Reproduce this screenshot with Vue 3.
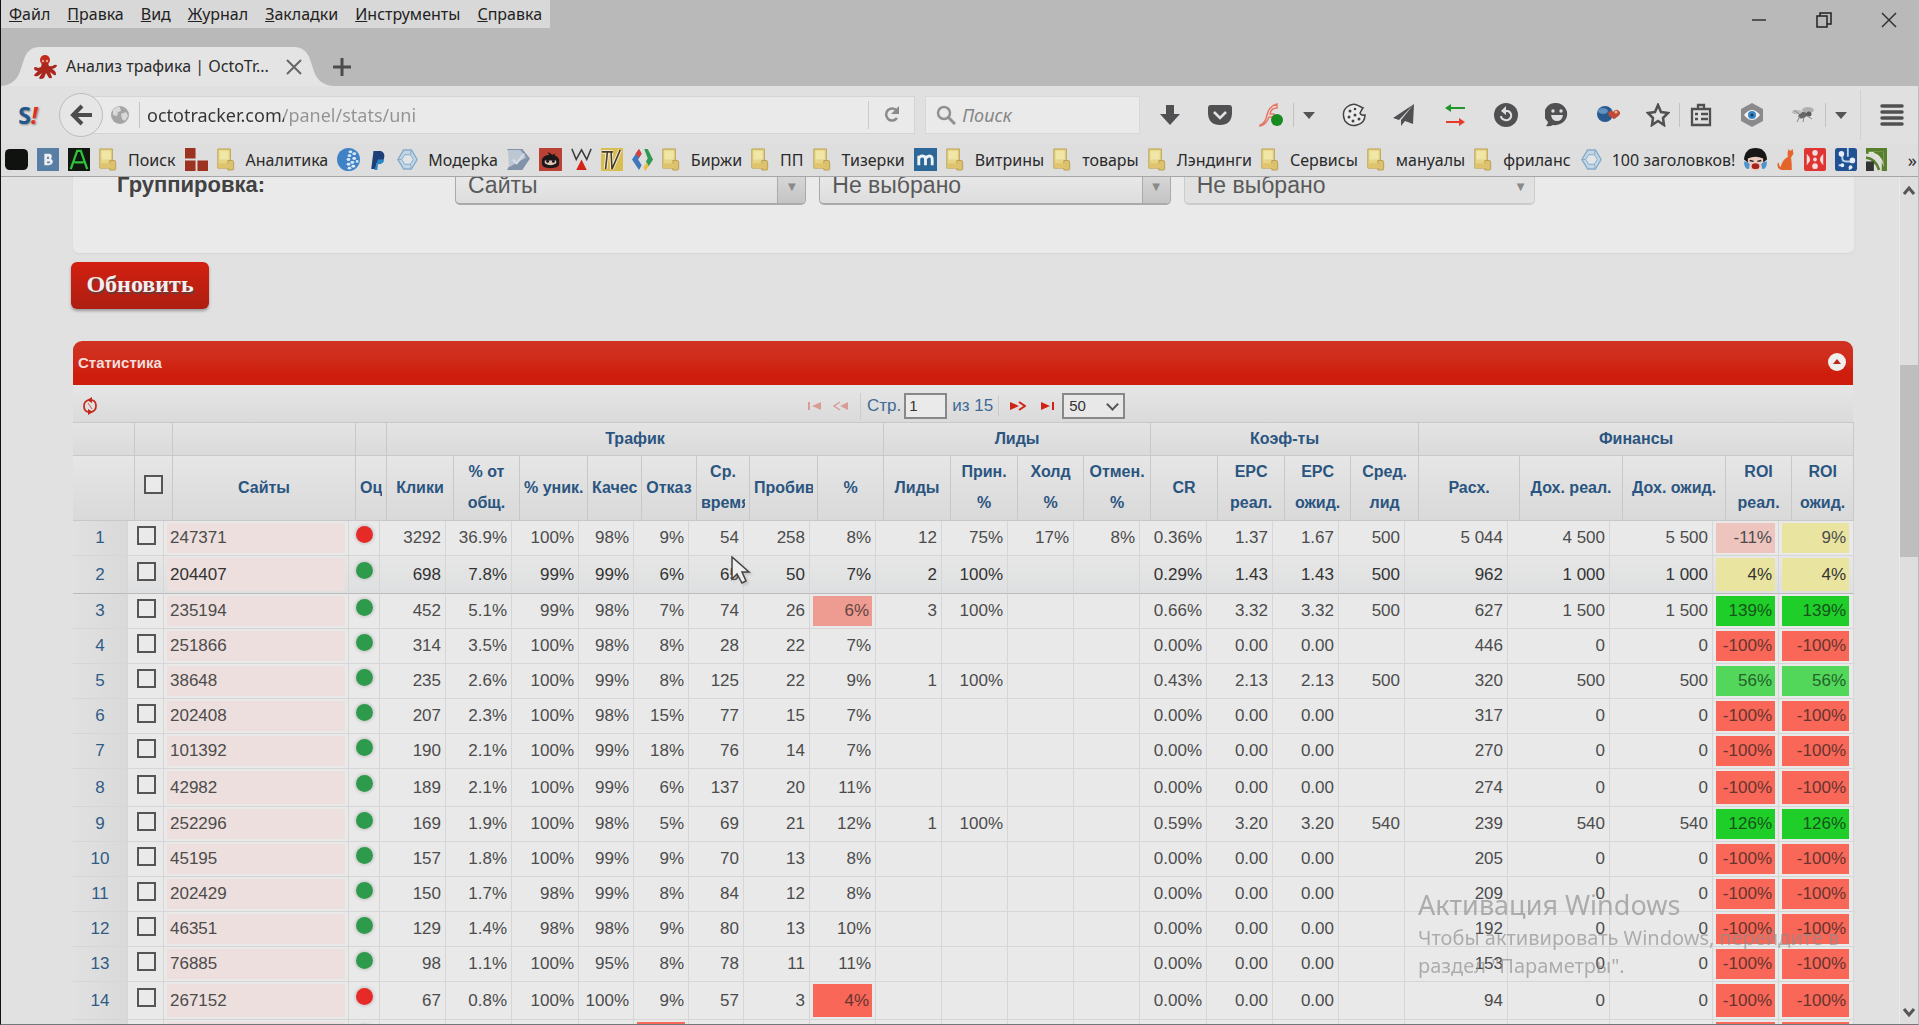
<script setup>
import { ref } from 'vue'

const menu = ['Файл', 'Правка', 'Вид', 'Журнал', 'Закладки', 'Инструменты', 'Справка']
const url = ref('octotracker.com/panel/stats/uni')
const query = ref('')
const page = ref('1')

const folder = '<path d="M1 1h15v20H1z" fill="#e6d585" stroke="#b79b4a"/><path d="M3 3h11v9H3z" fill="#efe6a8"/><path d="M13 13h5q2 0 2 2v7q0 1-2 1h-5z" fill="#dcc170" stroke="#b79b4a"/><path d="M2 16h13v5H2z" fill="#dfc36d"/>'
const ring = '<path d="M8 2h8l6 10-6 10H8L2 12z" fill="#c3d6e6" stroke="#86abc9" stroke-width="1.5"/><path d="M9 7h6l3 5-3 5H9l-3-5z" fill="#e2e5e8" stroke="#86abc9"/><path d="M2 12h4M16 2l-1 5M16 22l-1-5" stroke="#86abc9"/>'

const bookmarks = [
  { w: 23, art: '<rect y="1" width="24" height="22" rx="5" fill="#101210"/>' },
  { w: 22, art: '<rect width="24" height="24" fill="#587ea5"/><path d="M8 6h5q4 0 3 4l-1 1.500q3 1 2 4-1 2.500-4 2.500H8zM11 9v2.500h2V9zM11 14v2h3v-2z" fill="#eee" fill-rule="evenodd"/>' },
  { w: 22, art: '<rect width="24" height="24" fill="#101610"/><path d="M3 22 10 3h4l7 19M7 15h10" fill="none" stroke="#2dc43a" stroke-width="2.500"/>' },
  { w: 20, art: folder, label: 'Поиск' },
  { w: 23, art: '<path d="M0 0h11v11H0zM0 13h11v11H0zM13 13h11v11H13z" fill="#9b3320"/>' },
  { w: 20, art: folder, label: 'Аналитика' },
  { w: 23, art: '<circle cx="12" cy="12" r="12" fill="#3f83c6"/><g fill="#dbe8f2"><ellipse cx="14" cy="4" rx="2" ry="1.500"/><ellipse cx="18" cy="6" rx="2" ry="1.500"/><ellipse cx="13" cy="8" rx="2" ry="1.500"/><ellipse cx="18" cy="11" rx="2" ry="1.500"/><ellipse cx="12" cy="12" rx="2" ry="1.500"/><ellipse cx="21" cy="14" rx="1.500" ry="1.500"/><ellipse cx="16" cy="15" rx="2" ry="1.500"/><ellipse cx="12" cy="17" rx="2" ry="1.500"/><ellipse cx="17" cy="19" rx="2" ry="1.500"/><ellipse cx="13" cy="21" rx="2" ry="1.500"/></g>' },
  { w: 18, art: '<path d="M6 3h10q6 2 4 8-2 5-8 5h-2l-1 6H3z" fill="#1f3f78"/><path d="M12 12h8q0 5-8 5l-1 6H7z" fill="#2c87c4"/>' },
  { w: 23, art: ring, label: 'Модерkа' },
  { w: 23, art: '<path d="M0 1h16l8 10-8 12H0l6-12z" fill="#8293a9"/><path d="M1 2h13l6 8L2 20z" fill="#bcc7d3"/><path d="m6 12 4 4 8-10" fill="none" stroke="#d9e0e7" stroke-width="2"/>' },
  { w: 23, art: '<rect width="24" height="24" fill="#b94234"/><path d="M3 14q0-7 9-7 9 0 9 7v3q-1 4-9 4t-9-4zM11 8 9 4l5 3 3-1-1 3z" fill="#1c1818"/><path d="M6 13h12v3q-6 4-12 0z" fill="#dfc5bb"/><circle cx="9" cy="14" r="1.500" fill="#111"/><circle cx="15" cy="14" r="1.500" fill="#111"/>' },
  { w: 21, art: '<path d="m1 1 5 11 6-10 6 10 5-11" fill="none" stroke="#3a3a3a" stroke-width="1.700"/><path d="m12 12 6 11H6z" fill="#d22417"/>' },
  { w: 22, art: '<rect width="24" height="24" fill="#d9bd52"/><path d="M1 4h12M7 4l-2 18M11 4l1 18L21 2" fill="none" stroke="#f1ead4" stroke-width="4"/><path d="M1 4h12M7 4l-2 18M11 4l1 18L21 2" fill="none" stroke="#473b24" stroke-width="1.700"/>' },
  { w: 21, art: '<path d="M8 1 0 12l8 11 3-5-4-6 4-6z" fill="#3e78ba"/><path d="M8 1 4 6l4 4 3-4z" fill="#dc3f36"/><path d="M14 1h4l6 11-5 7-3-5 2-3z" fill="#2e9950"/><path d="m13 20 4-5 2 4-4 5z" fill="#edbd3b"/>' },
  { w: 20, art: folder, label: 'Биржи' },
  { w: 20, art: folder, label: 'ПП' },
  { w: 20, art: folder, label: 'Тизерки' },
  { w: 23, art: '<rect width="24" height="24" fill="#2c6797"/><path d="M5 18V8M5 11q2-4 6-2 1 1 1 3v6M12 11q3-4 6-2 1 1 1 3v6" fill="none" stroke="#eef2f4" stroke-width="3"/>' },
  { w: 20, art: folder, label: 'Витрины' },
  { w: 20, art: folder, label: 'товары' },
  { w: 20, art: folder, label: 'Лэндинги' },
  { w: 20, art: folder, label: 'Сервисы' },
  { w: 20, art: folder, label: 'мануалы' },
  { w: 20, art: folder, label: 'фриланс' },
  { w: 23, art: ring, label: '100 заголовков!' },
  { w: 23, art: '<path d="M0 12Q1 0 12 0t12 12l-4 3H4z" fill="#171717"/><path d="M4 11q8-4 16 0v6q-2 7-8 7t-8-7z" fill="#ecccc0"/><path d="M0 14q4 0 6 3l-1 5q-5 0-5-8zM24 14q-4 0-6 3l1 5q5 0 5-8z" fill="#4b94cf"/><ellipse cx="12" cy="19" rx="4" ry="3" fill="#a52421"/><path d="m6 13 4 1M18 13l-4 1" stroke="#222" stroke-width="1.500"/>' },
  { w: 19, art: '<path d="m16 1 2 2 3-2 1 5-3 4q1 5 1 13H7q-6-1-5-7 2-2 2 2l2 2q1-7 9-11-1-4 1-8z" fill="#e5642a"/>' },
  { w: 22, art: '<rect width="24" height="24" rx="2" fill="#df3431"/><g fill="#f3dedd"><circle cx="12" cy="5" r="3"/><circle cx="12" cy="19" r="3"/><path d="M3 6q7 6 0 12zM21 6q-7 6 0 12z"/></g><circle cx="12" cy="12" r="2" fill="#f3dedd"/>' },
  { w: 22, art: '<rect width="24" height="24" rx="3" fill="#205193"/><path d="M8 6v5q0 3 4 3h6M14 0v9M4 18h4M16 20v3" fill="none" stroke="#b9d2ea" stroke-width="2"/><g fill="#e8eef4"><circle cx="7" cy="6" r="3"/><circle cx="19" cy="13" r="3"/><circle cx="8" cy="18" r="2"/><circle cx="17" cy="20" r="2"/></g>' },
  { w: 21, art: '<path d="M0 0h24v24h-6V9Q10 6 0 6z" fill="#587f29"/><path d="M3 4h17v16Q18 8 3 6z" fill="#dfe5d5"/><path d="M9 4h11v12Q17 7 9 5z" fill="#587f29"/><path d="M0 10q11 1 15 13" fill="none" stroke="#587f29" stroke-width="3"/><path d="M0 14h9v10H0z" fill="#333"/>' }
]

const tools = [
  { name: 'Загрузки', mr: 26, w: 24, art: '<path d="M8 2h8v9h6L12 22 2 11h6z" fill="#505052"/>' },
  { name: 'Pocket', mr: 27, w: 24, art: '<path d="M3 2h18q3 0 3 3v6q-1 11-12 11T0 11V5q0-3 3-3z" fill="#505052"/><path d="m6 9 6 6 6-6" fill="none" stroke="#e4e4e4" stroke-width="2.500"/>' },
  { name: 'Flash', mr: 10, w: 24, art: '<path d="M1 22q5-1 7-10t10-11v4q-6 0-7 6h4v3h-5q-3 8-9 9z" fill="#ecdcd8" stroke="#e27869" stroke-width="1.500"/><circle cx="18" cy="17" r="6" fill="#178a20"/>' },
  { sep: true, mr: 9 },
  { name: 'Меню Flash', mr: 27, w: 12, drop: true },
  { name: 'Cookies', mr: 26, w: 24, art: '<path d="M17 3Q11-1 5 4T3 18q5 6 12 4 8-2 8-10-4 1-5-2 2-4 3-5z" fill="#ececec" stroke="#444" stroke-width="1.500"/><g fill="#444"><circle cx="8" cy="8" r="1.500"/><circle cx="13" cy="6" r="1.300"/><circle cx="7" cy="14" r="1.500"/><circle cx="13" cy="12" r="1.500"/><circle cx="11" cy="18" r="1.500"/><circle cx="17" cy="16" r="1.500"/></g>' },
  { name: 'Отправить', mr: 27, w: 24, art: '<path d="M22 1 1 15l6 2zM22 1 9 17v6l4-5 8 3z" fill="#505052"/>' },
  { name: 'Прокси', mr: 27, w: 24, art: '<path d="M2 5l6-4v3h14v2H8v3z" fill="#20962d"/><path d="M22 19l-6-4v3H3v2h13v3z" fill="#e63a2b"/>' },
  { name: 'История', mr: 27, w: 24, art: '<circle cx="12" cy="12" r="12" fill="#505052"/><path d="M10 8h4q4 2 3 6-2 4-6 3-4-1-4-4" fill="none" stroke="#dedede" stroke-width="2"/><path d="m7 8 5-5v9z" fill="#dedede"/>' },
  { name: 'Hello', mr: 27, w: 24, art: '<path d="M12 0a12 11 0 1 1-4 22q-3 2-7 1 2-2 2-4A12 11 0 0 1 12 0z" fill="#505052"/><path d="M6 12h12q-1 6-6 6t-6-6z" fill="#dedede"/><circle cx="8" cy="8" r="1.700" fill="#dedede"/><circle cx="16" cy="8" r="1.700" fill="#dedede"/>' },
  { name: 'Дополнение', mr: 26, w: 24, art: '<circle cx="9" cy="11" r="8" fill="#28598f"/><ellipse cx="7" cy="8" rx="5" ry="3" fill="#5f92be"/><path d="M12 10q3-4 5-1 3-4 6-1t-2 6q-4 4-5 0-3 1-4-4z" fill="#bf4b34"/><circle cx="20" cy="9" r="1.500" fill="#e9b49f"/>' },
  { name: 'В закладки', mr: 9, w: 24, art: '<path d="m12 2 3 7 7 1-5 5 1 7-6-4-6 4 1-7-5-5 7-1z" fill="none" stroke="#505052" stroke-width="2.500"/>' },
  { sep: true, mr: 9 },
  { name: 'Список закладок', mr: 27, w: 24, art: '<path d="M3 6h18v16H3zM9 5V2h6v3M6 11h3M12 11h7M6 16h3M12 16h7" fill="none" stroke="#505052" stroke-width="2.300"/>' },
  { name: 'Просмотр', mr: 27, w: 24, art: '<path d="m12 0 11 6v12l-11 6-11-6V6z" fill="#8a8a8c"/><path d="M4 12q8-10 16 0-8 10-16 0z" fill="#f2f2f2"/><circle cx="12" cy="12" r="4" fill="#3885c4"/><circle cx="12" cy="12" r="1.500" fill="#173a5c"/>' },
  { name: 'Firebug', mr: 10, w: 24, art: '<ellipse cx="12" cy="12" rx="5" ry="3" fill="#666" transform="rotate(-25 12 12)"/><ellipse cx="17" cy="7" rx="6" ry="3" fill="#b0b0b0"/><ellipse cx="6" cy="9" rx="5" ry="2" fill="#bbb"/><circle cx="18" cy="11" r="2.500" fill="#5a5a5a"/><path d="m9 13-3 6M13 14l-1 5M16 13l5 3M8 11l-5-4" stroke="#888"/>' },
  { sep: true, mr: 9 },
  { name: 'Меню Firebug', mr: 13, w: 12, drop: true },
  { sep: true, tall: true, mr: 19 },
  { name: 'Меню', mr: 0, w: 24, art: '<path d="M2 3h20M2 9h20M2 15h20M2 21h20" stroke="#505052" stroke-width="3.500" stroke-linecap="round"/>' }
]

const headCols = [62, 38, 183, 31, 67, 66, 68, 54, 55, 53, 68, 66, 67, 67, 66, 67, 67, 67, 66, 68, 101, 103, 103, 66, 62]
const bodyCols = [55, 36, 185, 31, 66, 66, 67, 55, 55, 55, 66, 66, 66, 66, 66, 66, 67, 66, 66, 66, 103, 102, 103, 66, 75]
const groups = [
  ['', 1], ['', 1], ['', 1], ['', 1],
  ['Трафик', 8], ['Лиды', 4], ['Коэф-ты', 4], ['Финансы', 5]
]
const heads = ['', 'check', 'Сайты', 'Оценка', 'Клики', '% от\nобщ.', '% уник.', 'Качество', 'Отказ', 'Ср.\nвремя', 'Пробив', '%', 'Лиды', 'Прин.\n%', 'Холд\n%', 'Отмен.\n%', 'CR', 'EPC\nреал.', 'EPC\nожид.', 'Сред.\nлид', 'Расх.', 'Дох. реал.', 'Дох. ожид.', 'ROI\nреал.', 'ROI\nожид.']

const source = [
  '247371|r|3292|36.9%|100%|98%|9%|54|258|8%|12|75%|17%|8%|0.36%|1.37|1.67|500|5 044|4 500|5 500|-11%|9%',
  '204407|g|698|7.8%|99%|99%|6%|65|50|7%|2|100%|||0.29%|1.43|1.43|500|962|1 000|1 000|4%|4%',
  '235194|g|452|5.1%|99%|98%|7%|74|26|6%|3|100%|||0.66%|3.32|3.32|500|627|1 500|1 500|139%|139%',
  '251866|g|314|3.5%|100%|98%|8%|28|22|7%|||||0.00%|0.00|0.00||446|0|0|-100%|-100%',
  '38648|g|235|2.6%|100%|99%|8%|125|22|9%|1|100%|||0.43%|2.13|2.13|500|320|500|500|56%|56%',
  '202408|g|207|2.3%|100%|98%|15%|77|15|7%|||||0.00%|0.00|0.00||317|0|0|-100%|-100%',
  '101392|g|190|2.1%|100%|99%|18%|76|14|7%|||||0.00%|0.00|0.00||270|0|0|-100%|-100%',
  '42982|g|189|2.1%|100%|99%|6%|137|20|11%|||||0.00%|0.00|0.00||274|0|0|-100%|-100%',
  '252296|g|169|1.9%|100%|98%|5%|69|21|12%|1|100%|||0.59%|3.20|3.20|540|239|540|540|126%|126%',
  '45195|g|157|1.8%|100%|99%|9%|70|13|8%|||||0.00%|0.00|0.00||205|0|0|-100%|-100%',
  '202429|g|150|1.7%|98%|99%|8%|84|12|8%|||||0.00%|0.00|0.00||209|0|0|-100%|-100%',
  '46351|g|129|1.4%|98%|98%|9%|80|13|10%|||||0.00%|0.00|0.00||192|0|0|-100%|-100%',
  '76885|g|98|1.1%|100%|95%|8%|78|11|11%|||||0.00%|0.00|0.00||153|0|0|-100%|-100%',
  '267152|r|67|0.8%|100%|100%|9%|57|3|4%|||||0.00%|0.00|0.00||94|0|0|-100%|-100%',
  '|r|||||||||||||||||||||'
]
const rows = source.map((line, i) => {
  const [site, mark, ...cells] = line.split('|')
  return { n: i < 14 ? i + 1 : '', site, mark, cells }
})

const roiTone = { '-11%': 'blush', '9%': 'yellow', '4%': 'yellow', '139%': 'green', '126%': 'green', '56%': 'lime', '-100%': 'red' }
function tone(r, c) {
  if (c >= 19) return r === 14 ? 'red' : roiTone[rows[r].cells[c]]
  if (c === 7 && r === 2) return 'salmon'
  if (c === 7 && r === 13) return 'red'
  if (c === 4 && r === 14) return 'red'
  return ''
}
</script>

<template>
  <div class="window">
    <header class="titlebar">
      <nav class="menu">
        <a v-for="m in menu" :key="m" href="#"><u>{{ m[0] }}</u>{{ m.slice(1) }}</a>
      </nav>
      <div class="winbtns">
        <button aria-label="Свернуть"><svg width="16" height="16" viewBox="0 0 16 16"><path d="M1 8h14" stroke="#333" stroke-width="1.500" /></svg></button>
        <button aria-label="Восстановить"><svg width="16" height="16" viewBox="0 0 16 16"><path d="M1 4h10v11H1zM4 4V1h11v11h-4" fill="none" stroke="#222" stroke-width="1.500" /></svg></button>
        <button aria-label="Закрыть"><svg width="16" height="16" viewBox="0 0 16 16"><path d="m1 1 14 14M15 1 1 15" stroke="#333" stroke-width="1.500" /></svg></button>
      </div>
    </header>

    <div class="tabs">
      <div class="tab">
        <svg class="tabshape" viewBox="0 0 335 39" preserveAspectRatio="none"><path d="M0 39q14-1 19-14l4-12Q27 0 39 0h256q13 0 17 13l4 12q5 13 19 14z" fill="#e4e4e4" /></svg>
        <svg class="octo" width="24" height="24" viewBox="0 0 24 24">
          <circle cx="11" cy="5" r="5" fill="#c22a1d" />
          <path d="M8 8h6l1 3q3 1 5-1 3-1 3 1-2 3-5 3 4 2 4 5 0 2-2 1l-4-3 2 5q0 2-3 1l-3-5-2 5q-4 2-5 0l3-5-4 3q-4 1-4-1l4-4q-4 0-4-3 1-2 4 0l3-1z" fill="#a9271c" />
          <circle cx="9" cy="6" r="1.200" fill="#e89c90" /><circle cx="13" cy="6" r="1.200" fill="#e89c90" />
        </svg>
        <span class="tabtitle">Анализ трафика | OctoTr...</span>
        <button class="tabclose" aria-label="Закрыть вкладку"><svg width="16" height="16" viewBox="0 0 16 16"><path d="m1 1 14 14M15 1 1 15" stroke="#666" stroke-width="2" /></svg></button>
      </div>
      <button aria-label="Новая вкладка"><svg width="18" height="18" viewBox="0 0 18 18"><path d="M9 0v18M0 9h18" stroke="#4c4c4c" stroke-width="3" /></svg></button>
    </div>

    <div class="toolbar">
      <button class="savefrom" aria-label="SaveFrom"><span class="s">S</span><span class="ex">!</span></button>
      <div class="address">
        <button class="back" aria-label="Назад"><svg width="22" height="22" viewBox="0 0 22 22"><path d="M12 2 3 11l9 9M4 11h18" fill="none" stroke="#4c4c4e" stroke-width="4" /></svg></button>
        <svg class="globe" width="20" height="20" viewBox="0 0 20 20"><circle cx="10" cy="10" r="9" fill="#a4a4a6" /><path d="M3 5q4-4 7-3l1 4-3 1-1 4-4-1zM11 9l5-2 2 4-3 5-3-2z" fill="#d9d9d9" /></svg>
        <input v-model="url" class="url" type="text" aria-label="Адрес">
        <button class="reload" aria-label="Обновить страницу"><svg width="18" height="18" viewBox="0 0 18 18"><path d="M14 12a6 6 0 1 1 0-7" fill="none" stroke="#8a8a8a" stroke-width="2.500" /><path d="M16 0v8H8z" fill="#8a8a8a" /></svg></button>
      </div>
      <label class="search">
        <svg width="20" height="20" viewBox="0 0 20 20"><circle cx="8" cy="8" r="6" fill="none" stroke="#919191" stroke-width="2.500" /><path d="m12 12 7 7" stroke="#919191" stroke-width="3" /></svg>
        <input v-model="query" type="search" placeholder="Поиск" aria-label="Поиск">
      </label>
      <div class="tools">
        <template v-for="(t, i) in tools" :key="i">
          <span v-if="t.sep" class="sep" :class="{ tall: t.tall }" :style="{ marginRight: t.mr + 'px' }"></span>
          <button v-else :aria-label="t.name" :style="{ marginRight: t.mr + 'px' }">
            <svg v-if="t.drop" width="12" height="8" viewBox="0 0 12 8"><path d="M0 1h12L6 8z" fill="#555" /></svg>
            <svg v-else :width="t.w" height="24" viewBox="0 0 24 24" v-html="t.art"></svg>
          </button>
        </template>
      </div>
    </div>

    <nav class="bookmarks">
      <a v-for="(b, i) in bookmarks" :key="i" href="#" :aria-label="b.label || 'Закладка'">
        <svg :width="b.w" height="23" viewBox="0 0 24 24" preserveAspectRatio="none" v-html="b.art"></svg>
        <span v-if="b.label">{{ b.label }}</span>
      </a>
      <button class="more" aria-label="Ещё закладки">»</button>
    </nav>

    <div class="view">
      <main class="content">
        <section class="filters">
          <label for="g1">Группировка:</label>
          <div class="picks">
            <div class="pick"><select id="g1"><option>Сайты</option></select></div>
            <div class="pick"><select aria-label="Группировка 2"><option>Не выбрано</option></select></div>
            <div class="pick off"><select aria-label="Группировка 3" disabled><option>Не выбрано</option></select></div>
          </div>
        </section>

        <button class="refresh">Обновить</button>

        <section class="grid">
          <div class="caption">
            <span>Статистика</span>
            <button aria-label="Свернуть таблицу"><svg width="18" height="18" viewBox="0 0 18 18"><circle cx="9" cy="9" r="9" fill="#f1eeee" /><path d="M5 11h8L9 6z" fill="#b8281c" /></svg></button>
          </div>
          <div class="pager">
            <button class="reloadgrid" aria-label="Перезагрузить"><svg width="14" height="18" viewBox="0 0 14 18"><path d="M6 3Q1 4 1 9t4 6M8 15q5-1 5-6T9 3" fill="none" stroke="#c4291b" stroke-width="1.700" /><path d="M9 0v6L4 3zM5 18v-6l5 3z" fill="#c4291b" /><path d="M5 6l4 6" stroke="#d4574b" /></svg></button>
            <div class="pages">
              <button class="dim" aria-label="Первая"><svg width="14" height="10" viewBox="0 0 14 10"><path d="M1 1v8" stroke="#cf3a2a" stroke-width="2" /><path d="M13 1v8L4 5z" fill="#cf3a2a" /></svg></button>
              <button class="dim" aria-label="Предыдущая"><svg width="16" height="10" viewBox="0 0 16 10"><path d="M15 1v8L7 5z" fill="#cf3a2a" /><path d="M7 1 1 5l6 4" fill="none" stroke="#cf3a2a" stroke-width="1.500" /></svg></button>
              <label class="pageno">Стр. <input v-model="page" type="text"></label>
              <span class="total">из 15</span>
              <button aria-label="Следующая"><svg width="16" height="10" viewBox="0 0 16 10"><path d="M0 1v8l9-4z" fill="#cf2415" /><path d="m9 1 6 4-6 4" fill="none" stroke="#cf2415" stroke-width="2" /></svg></button>
              <button aria-label="Последняя"><svg width="14" height="10" viewBox="0 0 14 10"><path d="M13 1v8" stroke="#cf2415" stroke-width="2" /><path d="M1 1v8l9-4z" fill="#cf2415" /></svg></button>
              <div class="size"><select aria-label="Строк на странице"><option>50</option></select></div>
            </div>
          </div>

          <table class="head">
            <colgroup><col v-for="(w, i) in headCols" :key="i" :style="{ width: w + 'px' }"></colgroup>
            <thead>
              <tr class="groups"><th v-for="(g, i) in groups" :key="i" :colspan="g[1]">{{ g[0] }}</th></tr>
              <tr class="names">
                <th v-for="(h, i) in heads" :key="i">
                  <input v-if="h === 'check'" type="checkbox" aria-label="Выбрать все">
                  <div v-else>{{ h }}</div>
                </th>
              </tr>
            </thead>
          </table>

          <table class="body">
            <colgroup><col v-for="(w, i) in bodyCols" :key="i" :style="{ width: w + 'px' }"></colgroup>
            <tbody>
              <tr v-for="(row, r) in rows" :key="r" :class="{ hover: r === 1 }">
                <td class="num">{{ row.n }}</td>
                <td class="chk"><input type="checkbox" :aria-label="'Выбрать ' + row.site"></td>
                <td class="tint"><div class="site">{{ row.site }}</div></td>
                <td class="mark"><i :class="row.mark"></i></td>
                <td v-for="(c, k) in row.cells" :key="k" :class="{ tint: tone(r, k), last: k === 20 }">
                  <div v-if="tone(r, k)" :class="tone(r, k)">{{ c }}</div>
                  <template v-else>{{ c }}</template>
                </td>
              </tr>
            </tbody>
          </table>
        </section>
      </main>
      <aside class="scroll">
        <svg width="14" height="12" viewBox="0 0 14 12"><path d="m2 10 5-6 5 6" fill="none" stroke="#555" stroke-width="3" /></svg>
        <div class="track"><div class="thumb"></div></div>
        <svg width="14" height="12" viewBox="0 0 14 12"><path d="m2 2 5 6 5-6" fill="none" stroke="#555" stroke-width="3" /></svg>
      </aside>
    </div>

    <div class="activation">
      <strong>Активация Windows</strong>
      <p>Чтобы активировать Windows, перейдите в раздел "Параметры".</p>
    </div>
    <svg class="cursor" width="20" height="30" viewBox="0 0 20 30"><path d="M1 1v22l5-5 5 9 4-2-4-9h7z" fill="#eee" stroke="#444" stroke-width="1.500" /></svg>
  </div>
</template>

<style>
body { margin: 0; }
</style>

<style scoped>
* { box-sizing: border-box; }
button { border: 0; padding: 0; background: none; font: inherit; color: inherit; display: flex; align-items: center; justify-content: center; }
a { color: inherit; text-decoration: none; }
svg { display: block; flex: none; }

.window { position: relative; height: 100vh; min-height: 600px; overflow: hidden; display: flex; flex-direction: column; background: #e1e1e1; border-left: 1px solid #111; border-bottom: 1px solid #777; border-right: 1px solid #bbb; font-family: "Noto Sans", "Open Sans", sans-serif; color: #333; }

.titlebar { display: flex; justify-content: space-between; align-items: flex-start; background: #b9b9b9; height: 47px; flex: none; }
.menu { display: flex; gap: 17px; height: 28px; padding: 0 8px 0 8px; background: #d8d8d8; font-size: 16px; line-height: 28px; color: #222; }
.winbtns { display: flex; gap: 49px; padding: 12px 21px 0 0; }

.tabs { display: flex; align-items: center; background: #b9b9b9; height: 39px; flex: none; }
.tab { position: relative; width: 332px; height: 39px; display: flex; align-items: center; gap: 8px; padding-left: 33px; }
.tabshape { position: absolute; left: 0; top: 0; width: 100%; height: 100%; }
.octo, .tabtitle, .tabclose { position: relative; }
.tabtitle { font-size: 16px; line-height: 22px; padding-bottom: 2px; flex: 1; white-space: nowrap; color: #2a2a2a; }
.tabclose { margin-right: 31px; }

.toolbar { display: flex; align-items: center; height: 57px; flex: none; background: #e0e0e0; padding: 0 14px 0 15px; }
.savefrom { width: 24px; margin-right: 2px; font-weight: 700; font-size: 23px; line-height: 26px; font-family: "Open Sans", sans-serif; text-shadow: 1px 1px 2px #888; }
.savefrom .s { color: #23578c; }
.savefrom .ex { color: #e0301f; font-style: italic; }
.address { display: flex; align-items: center; flex: 850 1 0; min-width: 0; height: 38px; margin-left: 34px; background: #eaeaea; border: 1px solid #d4d4d4; }
.back { flex: none; width: 44px; height: 44px; margin-left: -18px; border: 1px solid #bdbdbd; border-radius: 50%; background: #e6e6e6; }
.globe { margin-left: 7px; }
.url { flex: 1; min-width: 0; margin-left: 9px; height: 26px; border: 0; border-left: 1px solid #c4c4c4; outline: 0; padding: 0 0 0 7px; font: 18px "Noto Sans", sans-serif; background: linear-gradient(90deg, #333 144px, #929292 144px); background-clip: text; -webkit-background-clip: text; color: transparent; }
.reload { width: 46px; height: 28px; border-left: 1px solid #ccc; }
.search { display: flex; align-items: center; gap: 6px; flex: 206 1 0; min-width: 0; height: 38px; margin-left: 10px; padding-left: 10px; background: #eaeaea; border: 1px solid #d8d8d8; }
.search input { flex: 1; min-width: 0; border: 0; outline: 0; background: none; font: italic 18px "Noto Sans", sans-serif; padding: 0; }
.search input::placeholder { color: #858585; }
.tools { display: flex; align-items: center; padding-left: 18px; }
.sep { width: 1px; height: 24px; background: #c2c2c2; }
.sep.tall { height: 50px; background: #d0d0d0; }

.bookmarks { display: flex; align-items: center; gap: 9px; height: 34px; flex: none; padding: 0 1px 0 4px; background: #dedede; border-bottom: 1px solid #a6a6a6; font-size: 16px; line-height: 20px; color: #2a2a2a; white-space: nowrap; }
.bookmarks a { display: flex; align-items: center; gap: 9px; }
.more { margin-left: auto; font-size: 18px; }

.view { flex: 1; min-height: 0; display: flex; overflow: hidden; }
.content { flex: 1; min-width: 0; padding: 0 45px 0 72px; font-family: "Liberation Sans", Arial, sans-serif; }
.filters { display: flex; height: 96px; margin: -20px 0 9px; padding: 9px 44px 0; border-radius: 0 0 6px 6px; background: #eaeaea; box-shadow: 0 1px 2px #d4d4d4; }
.filters label { width: 338px; font-size: 22px; font-weight: 700; line-height: 38px; color: #424242; }
.picks { flex: 1; display: flex; gap: 13px; padding-right: 275px; }
.pick { position: relative; flex: 1; height: 39px; border: 1px solid #aaa; border-bottom-width: 2px; border-radius: 5px; background: linear-gradient(#ececec, #ddd); overflow: hidden; }
.pick::after { content: "▼"; position: absolute; right: 0; top: 0; width: 27px; height: 100%; text-align: center; font: 10px/40px "DejaVu Sans", sans-serif; color: #8a8a8a; border-left: 1px solid #aaa; background: linear-gradient(#ddd, #c4c4c4); pointer-events: none; }
.pick.off { border-color: #ccc; background: #e1e1e1; }
.pick.off::after { border: 0; background: none; }
.pick select { appearance: none; width: 100%; height: 36px; border: 0; padding: 0 12px; background: none; font: 23px "Liberation Sans", Arial, sans-serif; color: #5a5a5a; opacity: 1; }

.refresh { width: 138px; height: 47px; margin-left: -2px; padding-bottom: 2px; border-radius: 6px; background: linear-gradient(#d32010, #ad1f12); box-shadow: 0 2px 3px #999; font: bold 24px "Liberation Serif", serif; color: #f2eeee; text-shadow: 1px 2px 1px #5c4040; }

.grid { margin: 32px 1px 0 0; }
.caption { display: flex; align-items: center; justify-content: space-between; height: 44px; padding: 0 7px 2px 5px; border-radius: 9px 9px 0 0; background: linear-gradient(#d03322, #d02c1b 40%, #ce1d0c 75%); font-size: 15px; font-weight: 700; color: #f1dedb; }
.pager { display: flex; align-items: center; height: 37px; padding-top: 4px; background: linear-gradient(#e6e6e6, #dadada); font-size: 17px; color: #3f6a94; }
.reloadgrid { margin-left: 10px; }
.pages { display: flex; align-items: center; margin-left: 711px; height: 26px; }
.pages .dim { opacity: 0.4; margin-right: 11px; }
.pageno { display: flex; align-items: center; gap: 3px; padding-left: 6px; border-left: 1px solid #ccc; }
.pageno input { width: 43px; height: 26px; border: 2px solid #888; border-radius: 0; background: #eaeaea; padding: 0 3px; font: 15px "Liberation Sans", Arial, sans-serif; color: #333; }
.total { padding: 0 5px; margin-right: 11px; border-right: 1px solid #ccc; }
.pages .total + button { margin-right: 14px; }
.size { position: relative; margin-left: 8px; }
.size select { appearance: none; width: 63px; height: 26px; border: 2px solid #888; border-radius: 0; background: #e8e8e8; padding: 0 5px; font: 15px "Liberation Sans", Arial, sans-serif; color: #333; }
.size::after { content: ""; position: absolute; right: 8px; top: 7px; width: 7px; height: 7px; border: solid #555; border-width: 0 2px 2px 0; transform: rotate(45deg); pointer-events: none; }

table { width: 100%; table-layout: fixed; border-collapse: separate; border-spacing: 0; }
.head th { padding: 0; border-right: 1px solid #c8c8c8; border-bottom: 1px solid #c8c8c8; font-size: 16px; font-weight: 700; color: #2a5580; vertical-align: middle; }
.groups th { height: 34px; border-top: 1px solid #c8c8c8; background: linear-gradient(#e4e4e4, #dadada); }
.names th { height: 65px; background: linear-gradient(#e6e6e6, #d9d9d9); line-height: 31px; }
.names div { margin: 0 4px; padding-bottom: 2px; overflow: hidden; white-space: pre; }
input[type="checkbox"] { appearance: none; display: block; width: 19px; height: 19px; margin: 0; border: 2px solid #555; background: #eaeaea; }
.names input[type="checkbox"] { margin: -8px auto 0; }

.body tr { height: 35px; }
.body tr:nth-child(6n+2) { height: 38px; }
.body td { padding: 0 4px 0 0; border-right: 1px solid #d6d6d6; border-bottom: 1px solid #d6d6d6; background: #e9e9e9; font-size: 17px; line-height: 18px; text-align: right; white-space: nowrap; color: #4c4c4c; height: inherit; }
.body .hover td { background: linear-gradient(#e7e7e7, #dedfe0); border-bottom-color: #bbb; color: #333; }
.body td.num, .body .hover td.num { padding: 0; text-align: center; color: #2f5b87; background: linear-gradient(90deg, #e1e1e1, #d9d9d9); }
.body td.chk { padding: 0 0 6px 9px; }
.body td.mark { padding: 0 0 8px 7px; }
.mark i { display: block; width: 17px; height: 17px; border-radius: 50%; box-shadow: 0 0 2px 2px #d4d4d4; }
.mark .r { background: #e52a28; }
.mark .g { background: #2e9a4c; }
.body td.tint { padding: 2px 3px; height: 1px; }
.body td.last { padding-right: 4px; }
.tint div { height: 100%; min-height: 30px; display: flex; align-items: center; justify-content: flex-end; padding-right: 3px; box-sizing: border-box; }
.tint .site { background: #ecdfdd; justify-content: flex-start; padding-left: 3px; }
.tint .red { background: #f86758; color: #67352f; }
.tint .salmon { background: #ee9c92; color: #644541; }
.tint .blush { background: #edc4be; }
.tint .yellow { background: #e9e49f; }
.tint .green { background: #20ce2a; color: #14541a; }
.tint .lime { background: #52d75a; color: #24622a; }

.scroll { width: 19px; display: flex; flex-direction: column; align-items: center; padding: 7px 0 5px; background: #dedede; border-left: 1px solid #eaeaea; }
.track { flex: 1; width: 100%; margin: 6px 0; }
.thumb { height: 24%; margin-top: 163px; background: #bebebe; }

.activation { position: absolute; left: 1417px; top: 886px; width: 440px; color: #8c8c8c; opacity: 0.65; pointer-events: none; }
.activation strong { display: block; font-size: 27px; line-height: 38px; font-weight: 400; }
.activation p { margin: 0; font-size: 20px; line-height: 28px; }
.cursor { position: absolute; left: 730px; top: 556px; pointer-events: none; filter: drop-shadow(2px 2px 1px #9996); }
</style>
